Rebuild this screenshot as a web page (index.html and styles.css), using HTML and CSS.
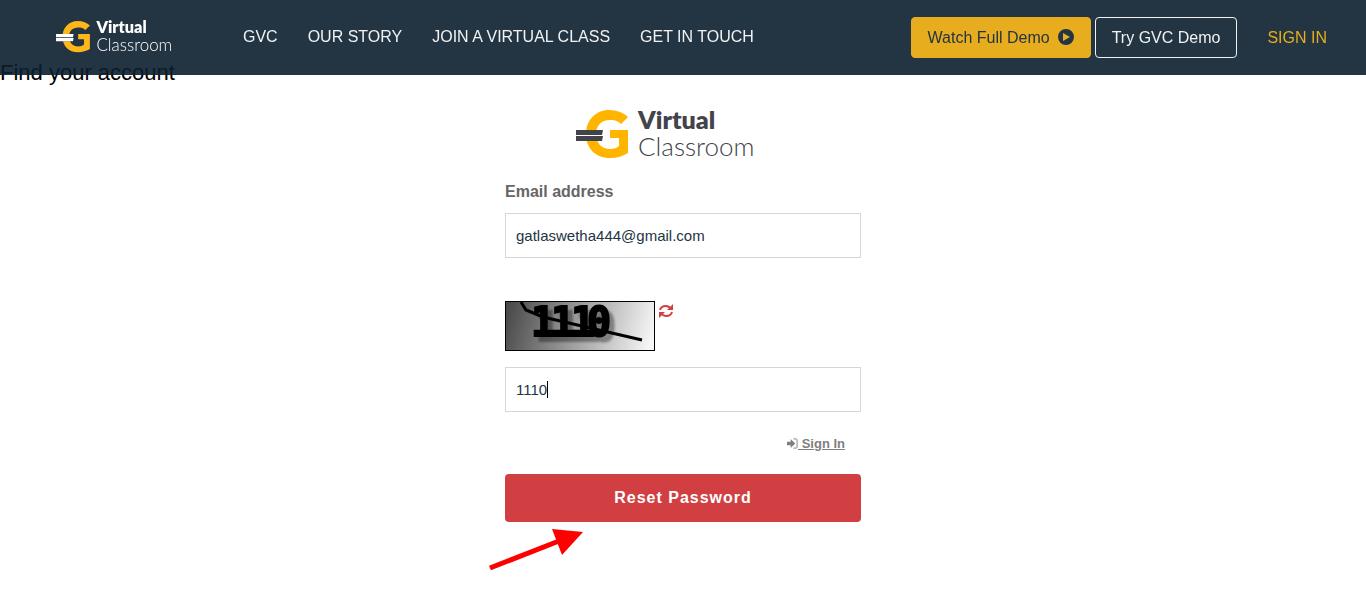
FILE: index.html
```html
<!DOCTYPE html>
<html lang="en">
<head>
  <meta charset="UTF-8">
  <meta name="viewport" content="width=device-width, initial-scale=1">
  <title>Find your account</title>
  <link rel="stylesheet" href="styles.css">
</head>
<body>
  <!-- Top bar -->
  <header class="navbar">
    <a href="#" class="logo logo-light">
      <svg viewBox="0 0 178 50" role="img" aria-label="Virtual Classroom">
        <path class="logo-g" d="M52 7 L45 14 C41 10 37 10 34 10 C25 10 20 16 20 24 C20 33 26 39 34 39 C38 39 41 38 43 36 L43 28 L34 28 L34 20 L52 20 L52 43 C47 46 41 48 34 48 C19 48 10 38 10 24 C10 10 20 0 33 0 C41 0 48 3 52 7 Z"/>
        <path class="logo-gap" d="M9 20 H28 L27 31 H9 Z"/>
        <path class="logo-bar" d="M0 20 H27 L26 25 H0 Z M0 26 H27 L26 31 H0 Z"/>
        <text class="logo-bold" x="62" y="19">Virtual</text>
        <text class="logo-thin" x="62" y="46">Classroom</text>
      </svg>
    </a>
    <nav class="menu">
      <a href="#">GVC</a>
      <a href="#">OUR STORY</a>
      <a href="#">JOIN A VIRTUAL CLASS</a>
      <a href="#">GET IN TOUCH</a>
    </nav>
    <div class="actions">
      <button type="button" class="btn btn-watch">Watch Full Demo
        <svg viewBox="0 0 16 16" aria-hidden="true">
          <path fill-rule="evenodd" d="M8 0 A8 8 0 1 1 8 16 A8 8 0 1 1 8 0 Z M5 4 V12 L12 8 Z"/>
        </svg>
      </button>
      <button type="button" class="btn btn-try">Try GVC Demo</button>
      <a href="#" class="sign-in">SIGN IN</a>
    </div>
  </header>

  <h1 class="page-title">Find your account</h1>

  <!-- Reset form -->
  <main class="reset">
    <div class="logo logo-dark">
      <svg viewBox="0 0 178 50" role="img" aria-label="Virtual Classroom">
        <path class="logo-g" d="M52 7 L45 14 C41 10 37 10 34 10 C25 10 20 16 20 24 C20 33 26 39 34 39 C38 39 41 38 43 36 L43 28 L34 28 L34 20 L52 20 L52 43 C47 46 41 48 34 48 C19 48 10 38 10 24 C10 10 20 0 33 0 C41 0 48 3 52 7 Z"/>
        <path class="logo-gap" d="M9 20 H28 L27 31 H9 Z"/>
        <path class="logo-bar" d="M0 20 H27 L26 25 H0 Z M0 26 H27 L26 31 H0 Z"/>
        <text class="logo-bold" x="62" y="19">Virtual</text>
        <text class="logo-thin" x="62" y="46">Classroom</text>
      </svg>
    </div>

    <form class="reset-form">
      <label for="email">Email address</label>
      <input type="email" id="email" value="gatlaswetha444@gmail.com">

      <div class="captcha">
        <svg class="captcha-image" viewBox="0 0 150 50" role="img" aria-label="Captcha">
          <defs>
            <linearGradient id="shade" gradientUnits="userSpaceOnUse" x1="0" y1="10" x2="145" y2="50">
              <stop offset="0" stop-color="#484848"/>
              <stop offset="1" stop-color="#f8f8f8"/>
            </linearGradient>
            <filter id="soft" x="-20%" y="-20%" width="140%" height="140%">
              <feDropShadow dx="5" dy="5" stdDeviation="1" flood-color="#000" flood-opacity="0.35"/>
            </filter>
          </defs>
          <rect x="0.5" y="0.5" width="149" height="49" fill="url(#shade)" stroke="#000"/>
          <text x="26 46 66 82" y="35" filter="url(#soft)">1110</text>
          <path d="M16 1 L21 9 L38 16 L137 39" fill="none" stroke="#000" stroke-width="3"/>
        </svg>
        <button type="button" class="refresh" aria-label="Refresh captcha">
          <svg viewBox="0 0 14 14" aria-hidden="true">
            <path d="M1 6 Q2 2 7 2 Q10 2 12 5 M13 8 Q12 12 7 12 Q4 12 2 9" fill="none" stroke="#d23f42" stroke-width="2"/>
            <path d="M14 0 V6 H8 Z M0 14 V8 H6 Z" fill="#d23f42"/>
          </svg>
        </button>
      </div>
      <div class="field">
        <input type="text" id="code" value="1110" aria-label="Captcha code" autocomplete="off">
        <span class="caret"></span>
      </div>

      <a href="#" class="back-link">
        <svg viewBox="0 0 12 12" aria-hidden="true">
          <path d="M0 4 H4 V1 L9 6 L4 11 V8 H0 Z"/>
          <path d="M7 1 H10 Q11 1 11 2 V10 Q11 11 10 11 H7" fill="none" stroke="#808080"/>
        </svg>
        Sign In</a>

      <div class="submit">
        <button type="submit" class="btn-reset">Reset Password</button>
        <!-- Arrow pointing at the button -->
        <svg class="arrow" viewBox="0 0 96 44" aria-hidden="true">
          <path d="M1 41 L70 14" fill="none" stroke="#f00" stroke-width="5"/>
          <path d="M63 2 L94 5 L73 28 Z" fill="#f00"/>
        </svg>
      </div>
    </form>
  </main>
</body>
</html>
```

FILE: styles.css
```css
* {
  box-sizing: border-box;
}

body {
  margin: 0;
  min-height: 100vh;
  font-family: Arial, "Liberation Sans", sans-serif;
  font-size: 16px;
  background: #fff;
}

button {
  font-family: inherit;
  cursor: pointer;
}

/* Top bar */
.navbar {
  position: fixed;
  top: 0;
  left: 0;
  right: 0;
  z-index: 1;
  height: 75px;
  padding: 0 39px 0 56px;
  display: flex;
  align-items: center;
  background: rgba(11, 30, 46, 0.9);
}
.navbar a {
  text-decoration: none;
}
.menu {
  display: flex;
  gap: 30px;
  margin-left: 71px;
  padding-bottom: 2px;
}
.menu a {
  color: #f0f2f3;
}
.actions {
  display: flex;
  align-items: center;
  gap: 4px;
  margin-left: auto;
}
.btn {
  display: flex;
  align-items: center;
  gap: 8px;
  height: 41px;
  padding: 0 16px;
  border: 1px solid #e8ad1e;
  border-radius: 4px;
  font-size: 16px;
}
.btn svg {
  width: 16px;
  height: 16px;
  margin-bottom: 2px;
  fill: #233443;
}
.btn-watch {
  background: #e8ad1e;
  color: #233443;
}
.btn-try {
  background: transparent;
  border-color: #f0f2f3;
  color: #f0f2f3;
}
.actions .sign-in {
  margin-left: 26px;
  color: #e8ad1e;
}

/* Logo */
.logo svg {
  display: block;
  width: 100%;
  overflow: visible;
}
.logo text {
  font-family: Lato, sans-serif;
  font-size: 25px;
}
.logo .logo-bold {
  font-weight: 800;
}
.logo .logo-thin {
  font-size: 26px;
  font-weight: 300;
}
.logo-light {
  width: 116px;
}
.logo-light .logo-g {
  fill: #fdb71a;
}
.logo-light .logo-gap {
  fill: #233443;
}
.logo-light .logo-bar,
.logo-light text {
  fill: #fff;
}
.logo-dark {
  width: 214px;
  margin: 0 auto;
  padding-right: 36px;
}
.logo-dark .logo-g {
  fill: #ffb400;
}
.logo-dark .logo-gap {
  fill: #fff;
}
.logo-dark .logo-bar,
.logo-dark text {
  fill: #43434c;
}

/* Page title, runs under the bar */
.page-title {
  margin: 0;
  padding-top: 60px;
  font-size: 22px;
  font-weight: normal;
  line-height: 26px;
  color: #000;
}

/* Reset form */
.reset {
  max-width: 356px;
  margin: 24px auto 0;
  padding-bottom: 60px;
}
.reset-form {
  display: flex;
  flex-direction: column;
  margin-top: 22px;
}
.reset-form label {
  margin-bottom: 11px;
  font-weight: bold;
  line-height: 20px;
  color: #666;
}
.reset-form input {
  display: block;
  width: 100%;
  height: 45px;
  padding: 0 10px;
  border: 1px solid #d5d6d7;
  border-radius: 0;
  outline: none;
  background: #fff;
  font-family: inherit;
  font-size: 15px;
  color: #233443;
}
.field {
  position: relative;
}
.caret {
  position: absolute;
  top: 14px;
  left: 42px;
  width: 1px;
  height: 17px;
  background: #000;
}

/* Captcha */
.captcha {
  display: flex;
  align-items: flex-start;
  gap: 4px;
  margin: 43px 0 16px;
}
.captcha-image {
  width: 150px;
  height: 50px;
}
.captcha text {
  font-family: "DejaVu Sans Mono", monospace;
  font-size: 40px;
  font-weight: bold;
  stroke: #000;
  stroke-width: 2px;
}
.refresh {
  margin-top: 3px;
  padding: 0;
  border: none;
  background: none;
}
.refresh svg {
  display: block;
  width: 14px;
  height: 14px;
}

/* Link and button */
.back-link {
  align-self: flex-end;
  margin: 23px 16px 22px 0;
  font-size: 13px;
  font-weight: bold;
  line-height: 17px;
  color: #808080;
}
.back-link svg {
  width: 11px;
  height: 11px;
  vertical-align: -1px;
  fill: #808080;
}
.submit {
  position: relative;
}
.btn-reset {
  display: block;
  width: 100%;
  height: 48px;
  border: none;
  border-radius: 4px;
  background: #d13f42;
  color: #fff;
  font-size: 16px;
  font-weight: bold;
  letter-spacing: 1px;
}
.arrow {
  position: absolute;
  top: 53px;
  left: -16px;
  width: 96px;
  height: 44px;
}
```
